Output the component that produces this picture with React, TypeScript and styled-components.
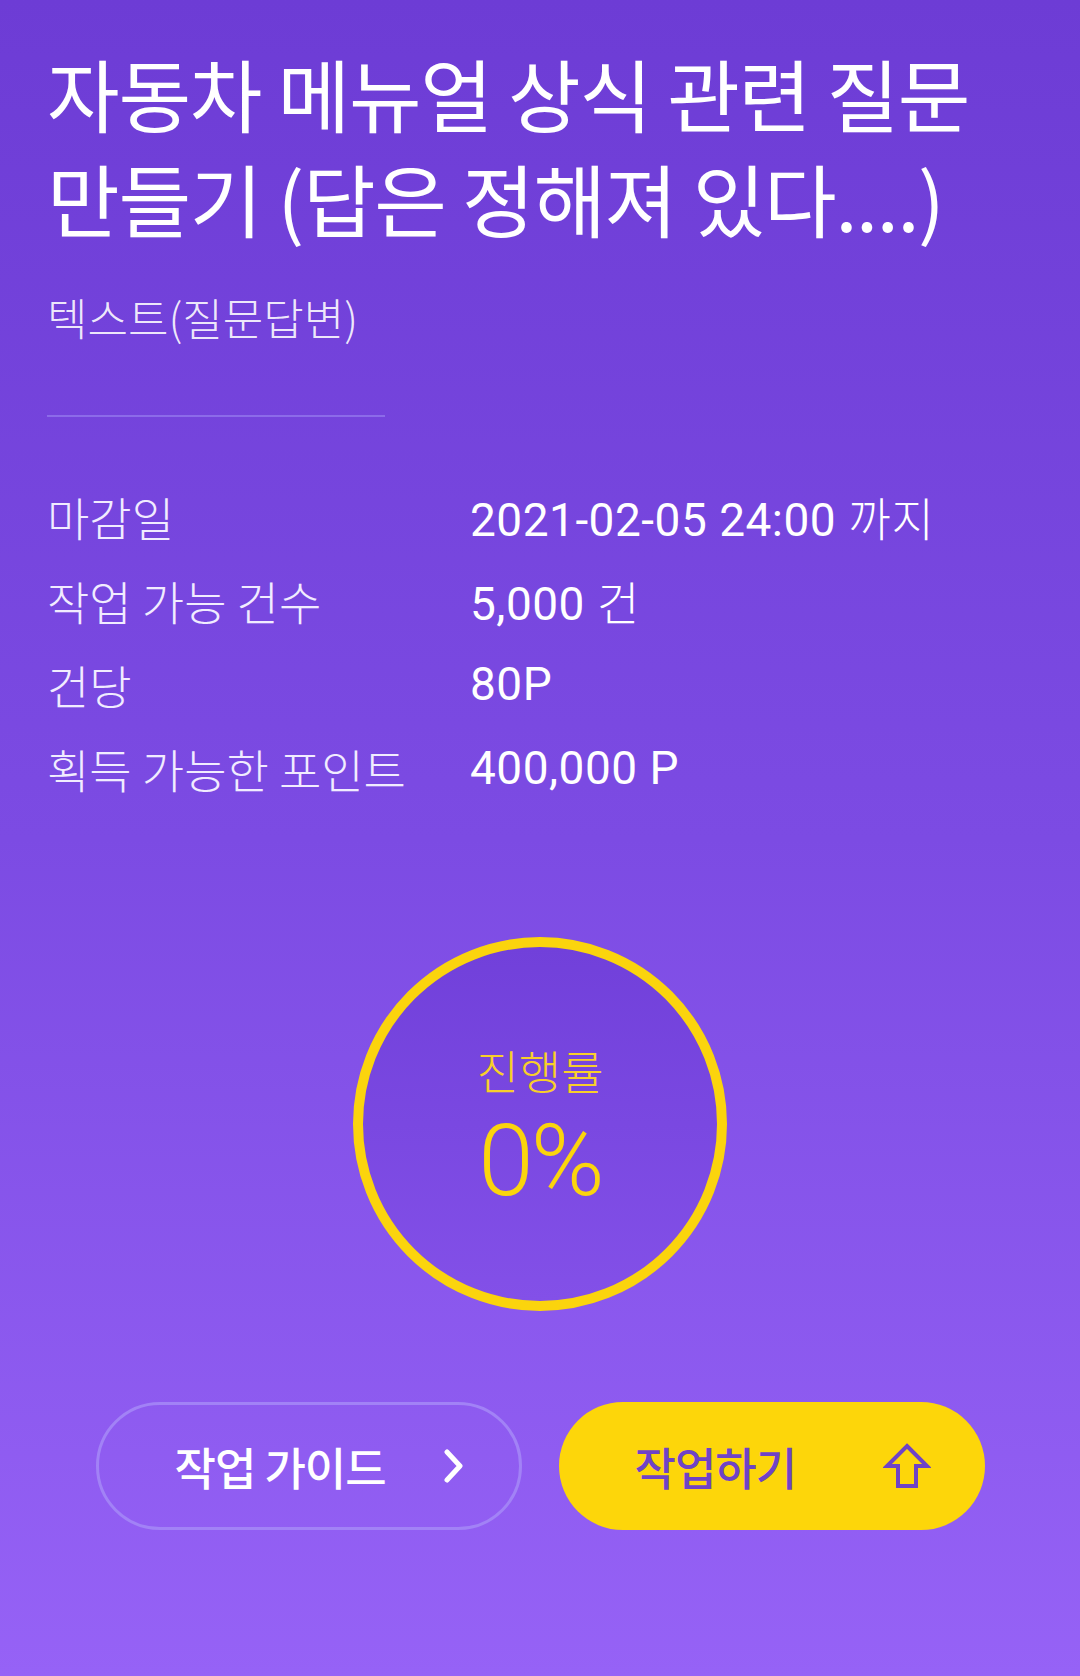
import React from 'react';
import styled, { createGlobalStyle } from 'styled-components';

const GlobalStyle = createGlobalStyle`
  html, body { margin: 0; padding: 0; }
  body { background: #9662f6; }
`;

const KR = `"Noto Sans CJK KR", sans-serif`;
const NUM = `Roboto, "Noto Sans CJK KR", sans-serif`;

const Page = styled.div`
  width: 1080px;
  min-height: 1676px;
  box-sizing: border-box;
  padding-top: 40px;
  background: linear-gradient(180deg, #6d3cd5 0%, #7c4be3 50%, #9662f6 100%);
  display: flex;
  flex-direction: column;
`;

const Header = styled.section`
  padding: 0 47px;
  display: flex;
  flex-direction: column;
`;

const Title = styled.h1`
  margin: 0;
  font-family: ${KR};
  font-size: 79px;
  font-weight: 400;
  line-height: 105px;
  letter-spacing: -1.3px;
  color: #ffffff;
  word-break: keep-all;
`;

const Category = styled.div`
  margin-top: 42px;
  font-family: ${KR};
  font-size: 44px;
  font-weight: 300;
  line-height: 50px;
  color: rgba(255, 255, 255, 0.9);
`;

const Divider = styled.hr`
  margin: 73px 0 0;
  width: 338px;
  height: 2px;
  border: none;
  background: #8c6be9;
`;

const InfoList = styled.dl`
  margin: 57px 0 0;
  display: flex;
  flex-direction: column;
`;

const InfoRow = styled.div`
  display: grid;
  grid-template-columns: 423px 1fr;
  height: 84px;
  align-items: center;
`;

const Label = styled.dt`
  font-family: ${KR};
  font-size: 46px;
  font-weight: 300;
  color: #f1ecff;
  white-space: nowrap;
`;

const Value = styled.dd`
  margin: 0;
  font-family: ${NUM};
  font-size: 46px;
  font-weight: 400;
  letter-spacing: 0.5px;
  color: #ffffff;
  white-space: nowrap;
`;

const Unit = styled.span`
  font-family: ${KR};
  font-weight: 300;
  font-size: 46px;
  letter-spacing: 1px;
`;

const ProgressWrap = styled.div`
  margin-top: 127px;
  display: flex;
  justify-content: center;
`;

const Ring = styled.div`
  width: 374px;
  height: 374px;
  box-sizing: border-box;
  border-radius: 50%;
  border: 10px solid #fbd40d;
  background: linear-gradient(180deg, #7140da 0%, #8350e8 100%);
  display: flex;
  flex-direction: column;
  align-items: center;
  padding-top: 96px;
`;

const RingLabel = styled.div`
  font-family: ${KR};
  font-size: 46px;
  font-weight: 300;
  line-height: 52px;
  color: #f8cf2a;
`;

const RingValue = styled.div`
  margin-top: 16px;
  font-family: ${NUM};
  font-size: 100px;
  font-weight: 300;
  line-height: 100px;
  color: #fbd40d;
  letter-spacing: -3px;
`;

const ButtonRow = styled.div`
  margin-top: 91px;
  display: flex;
  justify-content: center;
  gap: 37px;
`;

const ActionButton = styled.button<{ $primary?: boolean }>`
  width: 426px;
  height: 128px;
  box-sizing: border-box;
  border-radius: 64px;
  padding: 0 54px 0 76px;
  display: flex;
  align-items: center;
  justify-content: space-between;
  font-family: ${KR};
  font-size: 45px;
  font-weight: 500;
  letter-spacing: -1px;
  cursor: pointer;
  background: ${(p) => (p.$primary ? '#fdd60a' : 'transparent')};
  color: ${(p) => (p.$primary ? '#6f43c6' : '#ffffff')};
  border: ${(p) => (p.$primary ? 'none' : '3px solid #a282f6')};
`;

const Chevron = () => (
  <svg width="22" height="34" viewBox="0 0 22 34" aria-hidden>
    <polyline points="4,3 17,17 4,31" fill="none" stroke="#ffffff" strokeWidth="5" strokeLinecap="round" strokeLinejoin="round" />
  </svg>
);

const UpArrow = () => (
  <svg width="48" height="46" viewBox="0 0 48 46" aria-hidden>
    <path d="M24 3 L44 23 L33 23 L33 43 L15 43 L15 23 L4 23 Z" fill="none" stroke="#6f43c6" strokeWidth="4" strokeLinejoin="miter" />
  </svg>
);

const info: { label: string; value: string; unit?: string }[] = [
  { label: '마감일', value: '2021-02-05 24:00 ', unit: '까지' },
  { label: '작업 가능 건수', value: '5,000 ', unit: '건' },
  { label: '건당', value: '80P' },
  { label: '획득 가능한 포인트', value: '400,000 P' },
];

export default function App() {
  return (
    <>
      <GlobalStyle />
      <Page>
        <Header>
          <Title>자동차 메뉴얼 상식 관련 질문 만들기 (답은 정해져 있다....)</Title>
          <Category>텍스트(질문답변)</Category>
          <Divider />
          <InfoList>
            {info.map((r) => (
              <InfoRow key={r.label}>
                <Label>{r.label}</Label>
                <Value>
                  {r.value}
                  {r.unit && <Unit>{r.unit}</Unit>}
                </Value>
              </InfoRow>
            ))}
          </InfoList>
        </Header>
        <ProgressWrap>
          <Ring>
            <RingLabel>진행률</RingLabel>
            <RingValue>0%</RingValue>
          </Ring>
        </ProgressWrap>
        <ButtonRow>
          <ActionButton>
            작업 가이드
            <Chevron />
          </ActionButton>
          <ActionButton $primary>
            작업하기
            <UpArrow />
          </ActionButton>
        </ButtonRow>
      </Page>
    </>
  );
}
